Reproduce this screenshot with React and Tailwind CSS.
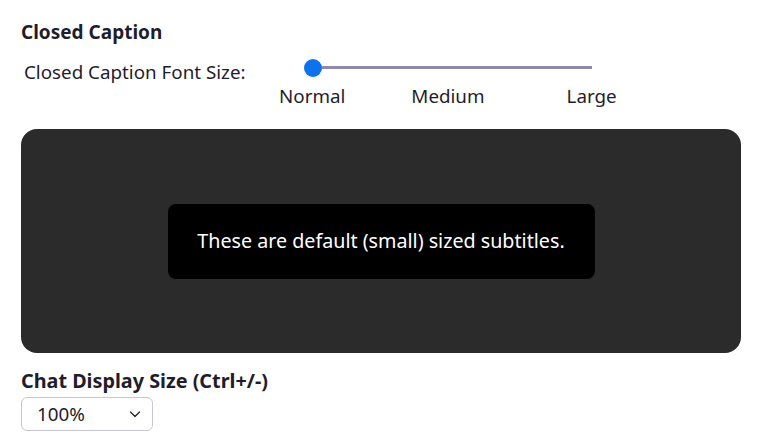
import React from 'react';

function Chevron() {
  return (
    <svg width="12" height="12" viewBox="0 0 12 12" fill="none" stroke="#2a2a2a" strokeWidth="1.4" strokeLinecap="round" strokeLinejoin="round">
      <path d="M1.5 4L6 8.5L10.5 4" />
    </svg>
  );
}

export default function App() {
  return (
    <div className="w-[757px] h-[444px] bg-white text-[#1f1d2b] pt-[19px] px-[21px]" style={{ fontFamily: '"Noto Sans", "Open Sans", sans-serif' }}>
      <h2 className="text-[19px] font-bold leading-[26px]">Closed Caption</h2>

      <div className="flex mt-[14px]">
        <div className="w-[259px] pl-[3px] text-[18.8px] leading-[26px]">Closed Caption Font Size:</div>
        <div className="w-[334px]">
          <div className="relative h-[18px]">
            <div className="absolute left-[42px] right-[22px] top-[7px] h-[3px] bg-[#8f8aab]" />
            <div className="absolute left-[24px] top-0 w-[18px] h-[18px] rounded-full bg-[#0e72ed]" />
          </div>
          <div className="flex text-[18.8px] leading-[26px] mt-[6px] -ml-[1px]">
            <span>Normal</span>
            <span className="ml-[66px]">Medium</span>
            <span className="ml-[82px]">Large</span>
          </div>
        </div>
      </div>

      <div className="mt-[20px] w-[720px] h-[224px] rounded-[16px] bg-[#2b2b2b] flex items-center justify-center">
        <div className="w-[427px] h-[75px] rounded-[8px] bg-black flex items-center justify-center text-white text-[19.7px] leading-[26px]">
          These are default (small) sized subtitles.
        </div>
      </div>

      <div className="mt-[15px] text-[19.8px] font-bold leading-[26px]">Chat Display Size (Ctrl+/-)</div>
      <div className="mt-[3px] w-[132px] h-[34px] rounded-[6px] border border-[#c9c5d8] flex items-center justify-between pl-[15px] pr-[11px] text-[18.8px]">
        <span>100%</span>
        <Chevron />
      </div>
    </div>
  );
}
